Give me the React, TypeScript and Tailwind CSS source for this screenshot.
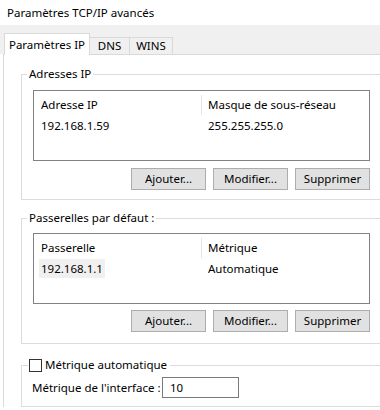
import type { ReactNode } from "react";

const font = { fontFamily: "'Noto Sans', 'Liberation Sans', sans-serif" };

function Btn({ children }: { children: ReactNode }) {
  return (
    <button className="h-[22px] w-[75px] border border-[#adadad] bg-[#e1e1e1] text-[11.5px] leading-none text-black">
      {children}
    </button>
  );
}

function Group({ legend, children, className = "" }: { legend: ReactNode; children: ReactNode; className?: string }) {
  return (
    <fieldset className={`border border-[#dcdcdc] pl-[11px] ${className}`}>
      <legend className="-ml-[6px] px-[2px] text-[11.5px] leading-[16px]">{legend}</legend>
      {children}
    </fieldset>
  );
}

function ListBox({
  cols,
  values,
  selected = false,
}: {
  cols: [string, string];
  values: [string, string];
  selected?: boolean;
}) {
  return (
    <div className="h-[71px] w-[337px] border border-[#828282] bg-white text-[11.5px]">
      <div className="flex h-[24px] items-center pt-[4px]">
        <div className="w-[167px] pl-[7px]">{cols[0]}</div>
        <div className="h-[20px] border-l border-[#e5e5e5] pl-[6px] leading-[20px]">{cols[1]}</div>
      </div>
      <div className="flex h-[22px] items-center">
        <div className="w-[167px] pl-[5px]">
          <span className={`px-[2px] py-[2px] ${selected ? "bg-[#f0f0f0]" : ""}`}>{values[0]}</span>
        </div>
        <div className="pl-[7px]">{values[1]}</div>
      </div>
    </div>
  );
}

function Buttons() {
  return (
    <div className="flex w-[337px] justify-end gap-[7px]">
      <Btn>Ajouter...</Btn>
      <Btn>Modifier...</Btn>
      <Btn>Supprimer</Btn>
    </div>
  );
}

export default function App() {
  return (
    <div className="h-[410px] w-[380px] overflow-hidden bg-white text-black" style={font}>
      <div className="flex h-[25px] items-center pl-[7px] text-[11.5px]">Paramètres TCP/IP avancés</div>

      <div className="flex h-[29px] items-end bg-[#f0f0f0] pl-[4px] text-[11.5px]">
        <div className="z-10 -mb-px flex h-[22px] w-[86px] items-center justify-center border border-b-0 border-[#d9d9d9] bg-white">
          Paramètres IP
        </div>
        <div className="flex h-[17px] w-[40px] items-center justify-center border-t border-r border-[#d9d9d9] bg-[#f0f0f0]">
          DNS
        </div>
        <div className="flex h-[17px] w-[43px] items-center justify-center border-t border-r border-[#d9d9d9] bg-[#f0f0f0]">
          WINS
        </div>
      </div>

      <div className="ml-[3px] w-[420px] border-t border-l border-[#d9d9d9] bg-white pl-[17px] pt-[11px]">
        <Group legend="Adresses IP" className="pb-[9px]">
          <div className="mt-[8px]">
            <ListBox cols={["Adresse IP", "Masque de sous-réseau"]} values={["192.168.1.59", "255.255.255.0"]} />
          </div>
          <div className="mt-[7px]">
            <Buttons />
          </div>
        </Group>

        <Group legend="Passerelles par défaut :" className="mt-[10px] pb-[11px]">
          <div className="mt-[7px]">
            <ListBox cols={["Passerelle", "Métrique"]} values={["192.168.1.1", "Automatique"]} selected />
          </div>
          <div className="mt-[6px]">
            <Buttons />
          </div>
        </Group>

        <fieldset className="mt-[13px] border border-[#dcdcdc] pb-[8px] pl-[10px]">
          <legend className="-ml-[4px] flex items-center pl-[1px] pr-[3px] text-[11.5px] leading-[16px]">
            <span className="mr-[3px] inline-block h-[13px] w-[13px] border border-[#333333] bg-white" />
            Métrique automatique
          </legend>
          <div className="mt-[4px] flex items-center text-[11.5px]">
            <span className="w-[130px] whitespace-nowrap">Métrique de l'interface :</span>
            <div className="flex h-[21px] w-[77px] items-center border border-[#7a7a7a] pl-[7px]">10</div>
          </div>
        </fieldset>
      </div>
    </div>
  );
}
